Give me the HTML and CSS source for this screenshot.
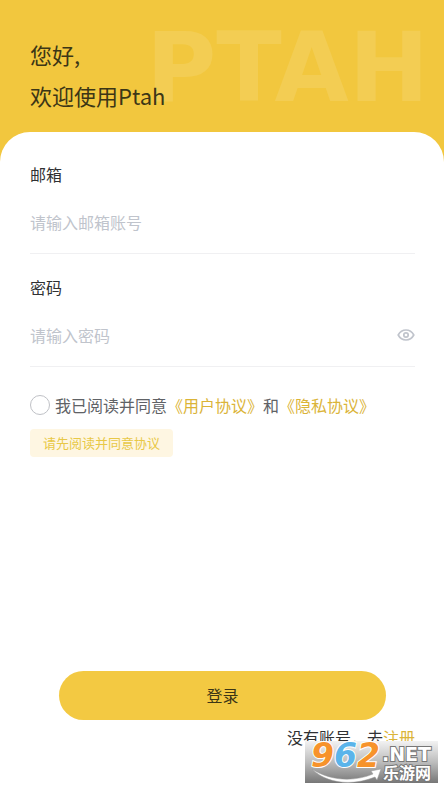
FILE: index.html
```html
<!DOCTYPE html>
<html lang="zh-CN">
<head>
<meta charset="utf-8">
<meta name="viewport" content="width=device-width, initial-scale=1">
<title>登录</title>
<link rel="stylesheet" href="styles.css">
</head>
<body>
<header class="hero">
  <div class="hero-mark" aria-hidden="true">PTAH</div>
  <h1 class="greeting">您好,<br>欢迎使用Ptah</h1>
</header>
<main class="card">
  <form class="form">
    <div class="field">
      <label class="label" for="email">邮箱</label>
      <div class="control">
        <input class="input" id="email" type="email" placeholder="请输入邮箱账号">
      </div>
    </div>
    <div class="field">
      <label class="label" for="password">密码</label>
      <div class="control">
        <input class="input" id="password" type="password" placeholder="请输入密码">
        <button class="reveal" type="button" aria-label="显示密码">
          <svg width="18" height="14" viewBox="0 0 18 14" fill="none" stroke="#c0c4cc" stroke-width="1.7">
            <path d="M1.200 7C3 3.700 5.700 2 9 2s6 1.700 7.800 5C15 10.300 12.300 12 9 12S3 10.300 1.200 7Z" stroke-linejoin="round"/>
            <circle cx="9" cy="7" r="2.200"/>
          </svg>
        </button>
      </div>
    </div>
    <div class="agree">
      <input class="agree-box" id="agree" type="checkbox">
      <label for="agree">我已阅读并同意<a class="link" href="#terms">《用户协议》</a>和<a class="link" href="#privacy">《隐私协议》</a></label>
    </div>
    <p class="notice">请先阅读并同意协议</p>
    <button class="submit" type="submit">登录</button>
    <p class="register">没有账号，去<a class="link" href="#register">注册</a></p>
  </form>
</main>
<div class="stamp">
  <svg class="stamp-art" viewBox="0 0 133 42">
    <defs>
      <linearGradient id="shade" x1="0" y1="0" x2="0" y2="1">
        <stop offset="0" stop-color="#f2f2f2"/>
        <stop offset=".5" stop-color="#bdbdbd"/>
        <stop offset="1" stop-color="#777777"/>
      </linearGradient>
    </defs>
    <rect width="133" height="42" fill="url(#shade)"/>
    <path d="M7 28C25 40 49 41 68 33L66 30L76 28L72 39L70 36C48 45 22 43 7 28Z" fill="#fff" stroke="#999" stroke-width=".5"/>
    <g class="stamp-digits">
      <text x="6" y="26" fill="#f7932b">9</text>
      <text x="29" y="26" fill="#5ab4ea">6</text>
      <text x="52" y="26" fill="#f7932b">2</text>
    </g>
    <text class="stamp-net" x="77" y="20">.NET</text>
    <text class="stamp-name" x="78" y="38">乐游网</text>
  </svg>
</div>
</body>
</html>
```
FILE: styles.css
```css
* {
  box-sizing: border-box;
}

body {
  display: flex;
  flex-direction: column;
  min-height: 100vh;
  margin: 0;
  position: relative;
  background: #f2c73e;
  color: #303133;
  font-family: "Noto Sans CJK SC", sans-serif;
  font-size: 16px;
  line-height: 24px;
}

p {
  margin: 0;
}

.hero {
  position: relative;
  overflow: hidden;
  padding: 34px 30px 16px;
}

.hero-mark {
  position: absolute;
  top: 20px;
  left: 146px;
  color: #f3cd53;
  font: bold 96px/96px "DejaVu Sans", sans-serif;
}

.greeting {
  position: relative;
  margin: 0;
  color: #3c3616;
  font-size: 22px;
  font-weight: 400;
  line-height: 41px;
}

.card {
  display: flex;
  flex: 1;
  padding: 30px 29px 40px 30px;
  border-radius: 30px 30px 0 0;
  background: #fff;
}

.form {
  display: flex;
  flex: 1;
  flex-direction: column;
  min-width: 0;
}

.field {
  display: flex;
  flex-direction: column;
  gap: 12px;
  margin-bottom: 21px;
}

.control {
  display: flex;
  align-items: center;
  padding-bottom: 7px;
  border-bottom: 1px solid #f0f0f2;
}

.input {
  flex: 1;
  min-width: 0;
  height: 48px;
  padding: 0;
  border: 0;
  outline: 0;
  background: none;
  color: inherit;
  font: inherit;
}

.input::placeholder {
  color: #c0c4cc;
  opacity: 1;
}

.reveal {
  display: flex;
  padding: 0;
  border: 0;
  background: none;
}

.agree {
  display: flex;
  align-items: center;
  gap: 5px;
  margin-top: 5px;
  color: #606266;
}

.agree-box {
  flex: none;
  width: 20px;
  height: 20px;
  margin: 0;
  border: 1px solid #bfc1c6;
  border-radius: 50%;
  appearance: none;
  background: #fff;
}

.agree-box:checked {
  background: #f2c73e;
}

.link {
  color: #dbb438;
  text-decoration: none;
}

.notice {
  align-self: flex-start;
  margin-top: 12px;
  padding: 0 13px;
  border-radius: 4px;
  background: #fef6e2;
  color: #e8c846;
  font-size: 13px;
  line-height: 28px;
}

.submit {
  height: 49px;
  margin: auto 29px 5px;
  padding: 0 0 2px;
  border: 0;
  border-radius: 25px;
  background: #f3c942;
  color: #3c3616;
  font: inherit;
}

.register {
  text-align: right;
}

.stamp {
  position: absolute;
  right: 6px;
  bottom: 6px;
  width: 133px;
}

.stamp-art {
  display: block;
  width: 100%;
  overflow: visible;
}

.stamp-digits {
  font: italic bold 33px "DejaVu Sans", sans-serif;
  stroke: #fff;
  stroke-width: 2px;
  paint-order: stroke;
}

.stamp-net,
.stamp-name {
  fill: #fff;
  stroke: #777;
  stroke-width: 2px;
  paint-order: stroke;
}

.stamp-net {
  font: bold 19px "DejaVu Sans", sans-serif;
}

.stamp-name {
  font: bold 16px "Noto Sans CJK SC", sans-serif;
}
```
